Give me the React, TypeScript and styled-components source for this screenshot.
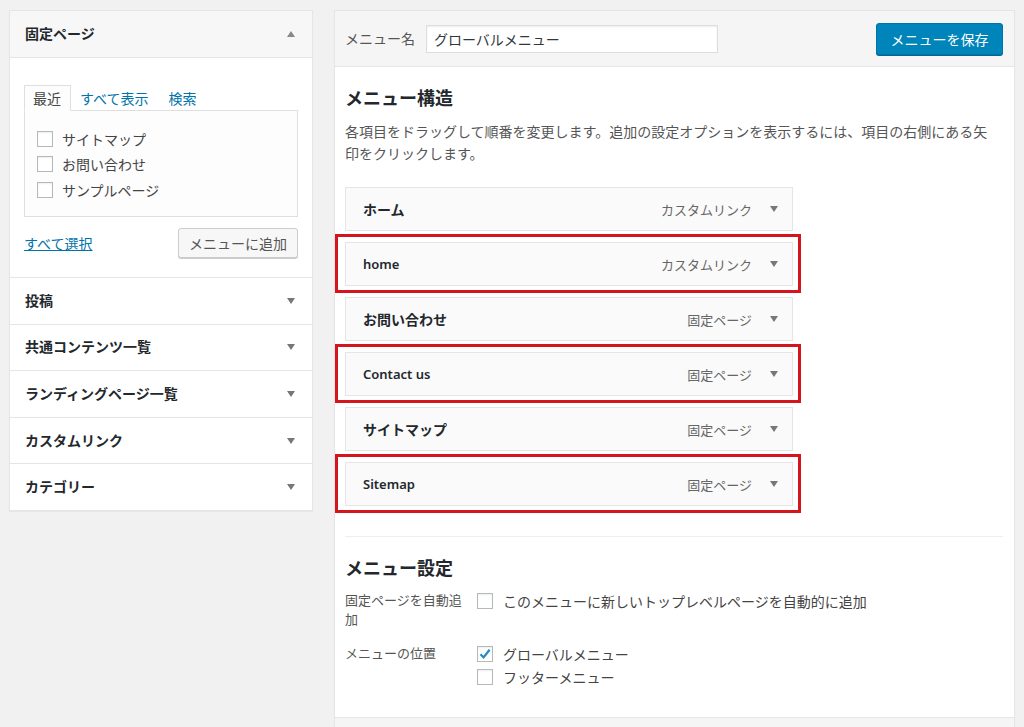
import React from "react";
import styled, { createGlobalStyle } from "styled-components";

const Global = createGlobalStyle`
  html, body { margin: 0; padding: 0; background: #f1f1f1; }
  body {
    font-family: "Noto Sans", "Noto Sans CJK JP", sans-serif;
    font-size: 13px;
    color: #444;
    width: 1024px;
    height: 727px;
    overflow: hidden;
  }
  * { box-sizing: border-box; }
`;

const Page = styled.div`
  display: flex;
  align-items: flex-start;
  gap: 21px;
  padding: 10px 0 0 9px;
`;

const Sidebar = styled.div`
  width: 304px;
  background: #fff;
  border: 1px solid #e5e5e5;
  box-shadow: 0 1px 1px rgba(0, 0, 0, 0.04);
`;

const SectionHeader = styled.div<{ $open?: boolean }>`
  display: flex;
  align-items: center;
  justify-content: space-between;
  height: ${(p) => (p.$open ? "47px" : "46.6px")};
  padding: 0 17px 0 15px;
  background: ${(p) => (p.$open ? "#f7f7f7" : "#fff")};
  border-top: ${(p) => (p.$open ? "none" : "1px solid #e5e5e5")};
  border-bottom: ${(p) => (p.$open ? "1px solid #e5e5e5" : "none")};
`;

const SectionTitle = styled.span`
  font-size: 14px;
  font-weight: 700;
  color: #23282d;
  line-height: 20px;
`;

const Caret = styled.span<{ $up?: boolean }>`
  width: 0;
  height: 0;
  flex: none;
  border-left: 4px solid transparent;
  border-right: 4px solid transparent;
  ${(p) =>
    p.$up
      ? "border-bottom: 6px solid #888;"
      : "border-top: 6px solid #777;"}
`;

const SectionBody = styled.div`
  padding: 27px 14px 19px 14px;
`;

const Tabs = styled.div`
  display: flex;
  align-items: flex-end;
  margin-bottom: -1px;
`;

const Tab = styled.span<{ $active?: boolean }>`
  display: block;
  height: 26px;
  line-height: 26px;
  padding: 0 ${(p) => (p.$active ? "9px" : "10px")} 0 8px;
  font-size: 14px;
  color: ${(p) => (p.$active ? "#444" : "#0073aa")};
  background: ${(p) => (p.$active ? "#fdfdfd" : "transparent")};
  border: 1px solid ${(p) => (p.$active ? "#dfdfdf" : "transparent")};
  border-bottom-color: ${(p) => (p.$active ? "#fdfdfd" : "transparent")};
  position: relative;
  z-index: 1;
`;

const TabPanel = styled.div`
  border: 1px solid #dfdfdf;
  background: #fdfdfd;
  padding: 15px 12px 14px 12px;
  height: 107px;
`;

const CheckRow = styled.label`
  display: flex;
  align-items: center;
  gap: 9px;
  height: 25.5px;
  font-size: 14px;
  color: #444;
`;

const Box = styled.span`
  display: inline-flex;
  align-items: center;
  justify-content: center;
  width: 16px;
  height: 16px;
  flex: none;
  border: 1px solid #b4b9be;
  background: #fff;
  box-shadow: inset 0 1px 2px rgba(0, 0, 0, 0.07);
`;

const SectionFooter = styled.div`
  display: flex;
  align-items: center;
  justify-content: space-between;
  margin-top: 11px;
`;

const Link = styled.a`
  color: #0073aa;
  text-decoration: underline;
  font-size: 14px;
`;

const SecondaryButton = styled.button`
  height: 30px;
  padding: 0 10px;
  font-family: inherit;
  font-size: 14px;
  color: #555;
  background: #f7f7f7;
  border: 1px solid #ccc;
  border-radius: 3px;
  box-shadow: 0 1px 0 #ccc;
`;

const Main = styled.div`
  width: 681px;
  background: #fff;
  border: 1px solid #e5e5e5;
  box-shadow: 0 1px 1px rgba(0, 0, 0, 0.04);
  height: 740px;
`;

const MainHeader = styled.div`
  display: flex;
  align-items: center;
  justify-content: space-between;
  height: 56px;
  padding: 0 11px 0 10px;
  background: #f5f5f5;
  border-bottom: 1px solid #e5e5e5;
`;

const NameGroup = styled.div`
  display: flex;
  align-items: center;
  gap: 11px;
`;

const Label = styled.span`
  font-size: 14px;
  color: #555;
  line-height: 19px;
`;

const TextInput = styled.div`
  width: 292px;
  height: 28px;
  padding: 0 7px;
  display: flex;
  align-items: center;
  font-size: 14px;
  color: #32373c;
  background: #fff;
  border: 1px solid #ddd;
  box-shadow: inset 0 1px 2px rgba(0, 0, 0, 0.07);
`;

const PrimaryButton = styled.button`
  height: 32px;
  width: 127px;
  font-family: inherit;
  font-size: 14px;
  color: #fff;
  background: #0085ba;
  border: 1px solid #0073aa;
  border-radius: 3px;
  box-shadow: 0 1px 0 #006799;
`;

const MainBody = styled.div`
  padding: 18px 11px 0 10px;
`;

const Heading = styled.h3`
  margin: 0;
  font-size: 18px;
  font-weight: 700;
  color: #23282d;
  line-height: 26px;
`;

const Description = styled.p`
  margin: 10px 0 0 0;
  width: 651px;
  font-size: 14px;
  line-height: 22px;
  color: #555;
`;

const ItemList = styled.ul`
  list-style: none;
  margin: 22px 0 0 0;
  padding: 0;
  display: flex;
  flex-direction: column;
  gap: 11px;
`;

const Item = styled.li<{ $highlight?: boolean }>`
  position: relative;
  display: flex;
  align-items: center;
  width: 448px;
  height: 44px;
  padding: 0 14px 0 17px;
  background: #fafafa;
  border: 1px solid #e5e5e5;
  ${(p) =>
    p.$highlight
      ? `&::after {
          content: "";
          position: absolute;
          top: -9px;
          left: -11px;
          right: -9px;
          bottom: -8px;
          border: 3px solid #d4161c;
        }`
      : ""}
`;

const ItemTitle = styled.span<{ $latin?: boolean }>`
  flex: 1;
  font-size: ${(p) => (p.$latin ? "13px" : "14px")};
  font-weight: ${(p) => (p.$latin ? 600 : 700)};
  color: #23282d;
`;

const ItemType = styled.span`
  font-size: 13px;
  color: #666;
  margin-right: 18px;
`;

const Divider = styled.div`
  margin-top: 30px;
  border-top: 1px solid #eee;
`;

const SettingsHeading = styled(Heading)`
  margin-top: 18px;
`;

const SettingRow = styled.div<{ $top: number }>`
  display: grid;
  grid-template-columns: 122px 1fr;
  gap: 10px;
  margin-top: ${(p) => p.$top}px;
`;

const SettingLabel = styled.div`
  font-size: 13px;
  color: #555;
  line-height: 19px;
  padding-top: 2px;
  word-break: break-all;
  width: 117px;
`;

const Options = styled.div`
  display: flex;
  flex-direction: column;
`;

const OptionRow = styled.label`
  display: flex;
  align-items: center;
  gap: 10px;
  height: 23px;
  font-size: 14px;
  color: #444;
`;

const Footer = styled.div`
  margin-top: 29px;
  margin-left: -10px;
  margin-right: -11px;
  height: 40px;
  background: #f5f5f5;
  border-top: 1px solid #e5e5e5;
`;

const Check = () => (
  <svg width="14" height="14" viewBox="0 0 14 14">
    <path d="M2.5 7.2 L5.6 10.4 L11.6 2.8" fill="none" stroke="#1e8cbe" strokeWidth="2.2" />
  </svg>
);

const items = [
  { title: "ホーム", type: "カスタムリンク" },
  { title: "home", type: "カスタムリンク", hl: true, latin: true },
  { title: "お問い合わせ", type: "固定ページ" },
  { title: "Contact us", type: "固定ページ", hl: true, latin: true },
  { title: "サイトマップ", type: "固定ページ" },
  { title: "Sitemap", type: "固定ページ", hl: true, latin: true },
];

const sections = ["投稿", "共通コンテンツ一覧", "ランディングページ一覧", "カスタムリンク", "カテゴリー"];

export default function App() {
  return (
    <>
      <Global />
      <Page>
        <Sidebar>
          <SectionHeader $open>
            <SectionTitle>固定ページ</SectionTitle>
            <Caret $up />
          </SectionHeader>
          <SectionBody>
            <Tabs>
              <Tab $active>最近</Tab>
              <Tab>すべて表示</Tab>
              <Tab>検索</Tab>
            </Tabs>
            <TabPanel>
              {["サイトマップ", "お問い合わせ", "サンプルページ"].map((t) => (
                <CheckRow key={t}>
                  <Box />
                  {t}
                </CheckRow>
              ))}
            </TabPanel>
            <SectionFooter>
              <Link>すべて選択</Link>
              <SecondaryButton>メニューに追加</SecondaryButton>
            </SectionFooter>
          </SectionBody>
          {sections.map((s) => (
            <SectionHeader key={s}>
              <SectionTitle>{s}</SectionTitle>
              <Caret />
            </SectionHeader>
          ))}
        </Sidebar>
        <Main>
          <MainHeader>
            <NameGroup>
              <Label>メニュー名</Label>
              <TextInput>グローバルメニュー</TextInput>
            </NameGroup>
            <PrimaryButton>メニューを保存</PrimaryButton>
          </MainHeader>
          <MainBody>
            <Heading>メニュー構造</Heading>
            <Description>
              各項目をドラッグして順番を変更します。追加の設定オプションを表示するには、項目の右側にある矢印をクリックします。
            </Description>
            <ItemList>
              {items.map((it) => (
                <Item key={it.title} $highlight={it.hl}>
                  <ItemTitle $latin={it.latin}>{it.title}</ItemTitle>
                  <ItemType>{it.type}</ItemType>
                  <Caret />
                </Item>
              ))}
            </ItemList>
            <Divider />
            <SettingsHeading>メニュー設定</SettingsHeading>
            <SettingRow $top={8}>
              <SettingLabel>固定ページを自動追加</SettingLabel>
              <Options>
                <OptionRow>
                  <Box />
                  このメニューに新しいトップレベルページを自動的に追加
                </OptionRow>
              </Options>
            </SettingRow>
            <SettingRow $top={13}>
              <SettingLabel>メニューの位置</SettingLabel>
              <Options>
                <OptionRow>
                  <Box>
                    <Check />
                  </Box>
                  グローバルメニュー
                </OptionRow>
                <OptionRow>
                  <Box />
                  フッターメニュー
                </OptionRow>
              </Options>
            </SettingRow>
            <Footer />
          </MainBody>
        </Main>
      </Page>
    </>
  );
}
